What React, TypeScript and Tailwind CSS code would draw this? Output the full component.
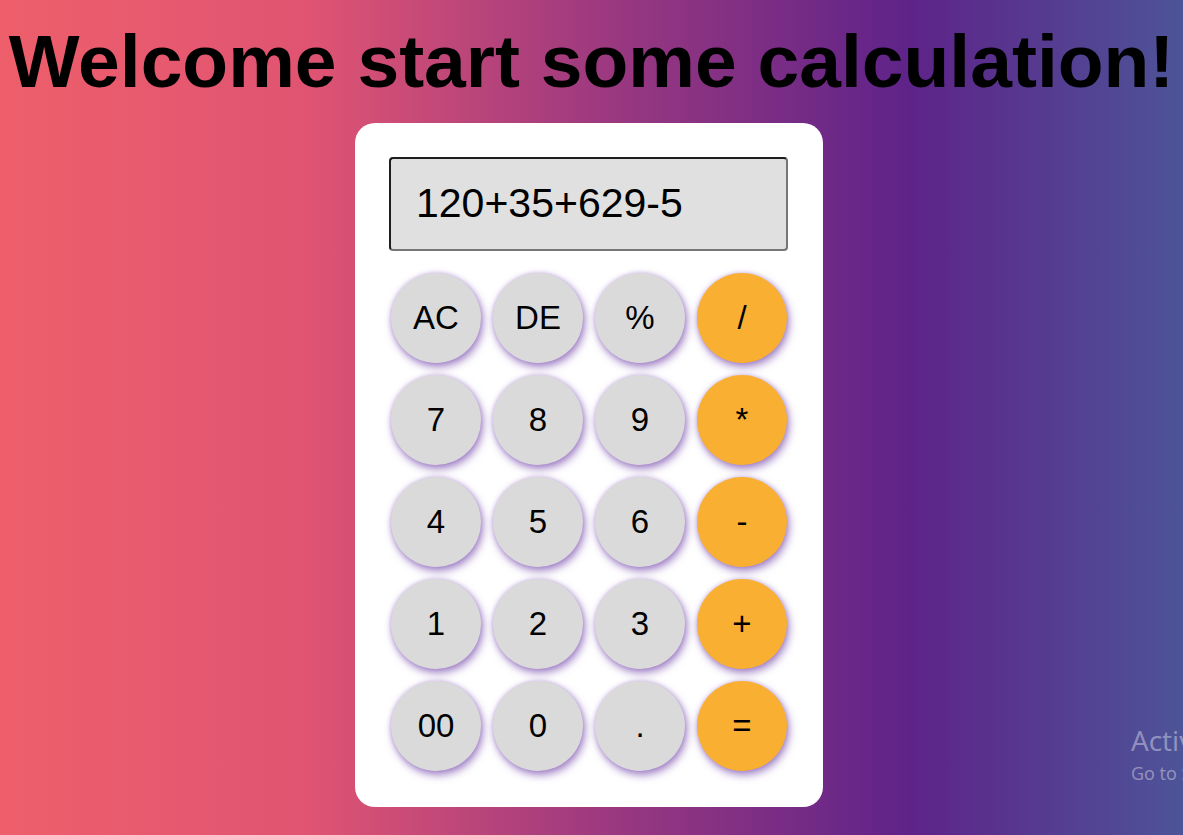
const KEYS: { label: string; op?: boolean }[] = [
  { label: 'AC' }, { label: 'DE' }, { label: '%' }, { label: '/', op: true },
  { label: '7' }, { label: '8' }, { label: '9' }, { label: '*', op: true },
  { label: '4' }, { label: '5' }, { label: '6' }, { label: '-', op: true },
  { label: '1' }, { label: '2' }, { label: '3' }, { label: '+', op: true },
  { label: '00' }, { label: '0' }, { label: '.' }, { label: '=', op: true },
];

function Key({ label, op }: { label: string; op?: boolean }) {
  return (
    <button
      className={
        'w-[90px] h-[90px] rounded-full flex items-center justify-center text-[33px] text-black ' +
        'shadow-[0_0_4px_rgba(140,90,200,0.35),2px_4px_8px_rgba(100,50,160,0.6)] ' +
        (op ? 'bg-[#f9b032]' : 'bg-[#dadada]')
      }
    >
      {label}
    </button>
  );
}

export default function App() {
  return (
    <div
      className="relative min-h-screen w-full overflow-hidden bg-[linear-gradient(to_right,#ee5f6b_0%,#e05472_26%,#9a3880_52%,#5e2389_77%,#4d5498_100%)]"
      style={{ fontFamily: '"Liberation Sans", Arial, sans-serif' }}
    >
      <h1 className="pt-[19px] text-center text-[75px] font-bold leading-[84px] text-black whitespace-nowrap">
        Welcome start some calculation!
      </h1>

      <div className="ml-[355px] mt-[20px] w-[468px] rounded-[20px] bg-white px-[34px] pt-[34px] pb-[36px]">
        <div className="h-[94px] w-[399px] rounded-[4px] border-2 border-t-[#1e1e1e] border-l-[#1e1e1e] border-b-[#767676] border-r-[#767676] bg-[#e0e0e0] pl-[25px] flex items-center text-[41px] text-black">
          120+35+629-5
        </div>

        <div className="mt-[22px] mx-auto w-[396px] grid grid-cols-4 gap-[12px]">
          {KEYS.map((k) => (
            <Key key={k.label} label={k.label} op={k.op} />
          ))}
        </div>
      </div>

      <div
        className="absolute left-[1131px] top-[721px] whitespace-nowrap text-white/40"
        style={{ fontFamily: '"Open Sans", "Noto Sans", sans-serif' }}
      >
        <div className="text-[28px] leading-[38px]">Activate Windows</div>
        <div className="text-[18px] leading-[28px]">Go to Settings to activate Windows.</div>
      </div>
    </div>
  );
}
